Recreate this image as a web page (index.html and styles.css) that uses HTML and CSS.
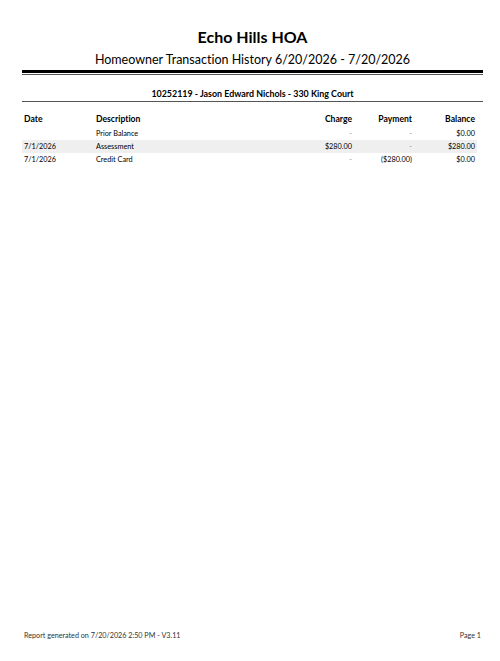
FILE: index.html
```html
<!DOCTYPE html>
<html>
<head>
<meta charset="utf-8">
<link rel="stylesheet" href="styles.css">
</head>
<body>
<div class="page">
  <header class="head">
    <h1 class="title">Echo Hills HOA</h1>
    <div class="subtitle">Homeowner Transaction History 6/20/2026 - 7/20/2026</div>
    <div class="rule"></div>
    <div class="account">10252119 - Jason Edward Nichols - 330 King Court</div>
  </header>
  <div class="table">
    <div class="row hdr">
      <div class="c date">Date</div>
      <div class="c desc">Description</div>
      <div class="c num">Charge</div>
      <div class="c num">Payment</div>
      <div class="c num">Balance</div>
    </div>
    <div class="row">
      <div class="c date"></div>
      <div class="c desc">Prior Balance</div>
      <div class="c num dash">-</div>
      <div class="c num dash">-</div>
      <div class="c num">$0.00</div>
    </div>
    <div class="row shade">
      <div class="c date">7/1/2026</div>
      <div class="c desc">Assessment</div>
      <div class="c num">$280.00</div>
      <div class="c num dash">-</div>
      <div class="c num">$280.00</div>
    </div>
    <div class="row">
      <div class="c date">7/1/2026</div>
      <div class="c desc">Credit Card</div>
      <div class="c num dash">-</div>
      <div class="c num">($280.00)</div>
      <div class="c num">$0.00</div>
    </div>
  </div>
  <footer class="foot">
    <span>Report generated on 7/20/2026 2:50 PM - V3.11</span>
    <span>Page 1</span>
  </footer>
</div>
</body>
</html>
```
FILE: styles.css
```css
html, body {
  margin: 0;
  padding: 0;
  background: #fff;
}
body {
  font-family: "Lato", "Open Sans", sans-serif;
  font-variant-ligatures: none;
  color: #000;
}
.page {
  box-sizing: border-box;
  height: 661px;
  margin-left: 22px;
  width: 461px;
  display: flex;
  flex-direction: column;
  padding-top: 27px;
}
.head {
  display: flex;
  flex-direction: column;
  align-items: center;
}
.title {
  margin: 0;
  font-size: 16px;
  font-weight: 700;
  line-height: 20px;
}
.subtitle {
  font-size: 12.5px;
  line-height: 19px;
  margin-top: 3px;
}
.rule {
  align-self: stretch;
  margin-top: 1px;
  height: 1px;
  border-top: 3px solid #000;
  border-bottom: 1px solid #555;
}
.account {
  align-self: stretch;
  text-align: center;
  font-size: 8.9px;
  font-weight: 700;
  line-height: 12px;
  margin-top: 13px;
  padding-bottom: 1px;
  border-bottom: 1px solid #555;
}
.table {
  width: 455px;
  margin-top: 9px;
}
.row {
  display: grid;
  grid-template-columns: 74px 188px 70px 60px 63px;
  height: 13px;
  align-items: center;
  font-size: 7.3px;
}
.row.hdr {
  font-size: 8.6px;
  font-weight: 700;
  height: 16px;
}
.row.shade {
  background: #efefef;
}
.c {
  white-space: nowrap;
}
.date {
  padding-left: 2px;
}
.num {
  text-align: right;
  padding-right: 2px;
}
.dash {
  color: #888;
}
.foot {
  margin-top: auto;
  margin-bottom: 21px;
  display: flex;
  justify-content: space-between;
  font-size: 7.2px;
  padding: 0 2px 0 2px;
  color: #333;
}
```
